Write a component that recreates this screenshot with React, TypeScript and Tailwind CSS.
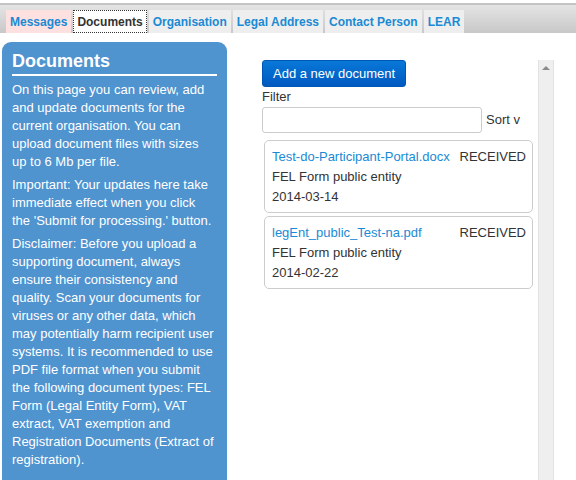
import React from 'react';

const tabs = [
    { label: 'Messages', kind: 'alert' },
    { label: 'Documents', kind: 'active' },
    { label: 'Organisation', kind: 'normal' },
    { label: 'Legal Address', kind: 'normal' },
    { label: 'Contact Person', kind: 'normal' },
    { label: 'LEAR', kind: 'normal' },
];

const documents = [
    { name: 'Test-do-Participant-Portal.docx', status: 'RECEIVED', type: 'FEL Form public entity', date: '2014-03-14' },
    { name: 'legEnt_public_Test-na.pdf', status: 'RECEIVED', type: 'FEL Form public entity', date: '2014-02-22' },
];

const tabClass = (kind: string) => {
    if (kind === 'alert') return 'bg-[#fde0e0] text-[#1a8ad4] border border-transparent';
    if (kind === 'active') return 'bg-white text-[#333] border border-dotted border-[#333]';
    return 'bg-[#eeeeee] text-[#1a8ad4] border border-transparent';
};

export default function App() {
    return (
        <div className="w-[576px] h-[480px] overflow-hidden bg-white font-['Liberation_Sans',Arial,sans-serif]">
            {/* tab bar */}
            <div className="mt-[3px] h-[30px] border-t-2 border-[#c4c4c4] bg-gradient-to-b from-[#e4e4e4] to-[#c8c8c8] flex items-end pl-[6px] gap-[2px]">
                {tabs.map(t => (
                    <div key={t.label} className={`h-[23px] px-[3px] flex items-center text-[12px] font-bold ${tabClass(t.kind)}`}>
                        {t.label}
                    </div>
                ))}
            </div>

            <div className="flex mt-[9px]">
                {/* info panel */}
                <div className="ml-[2px] w-[225px] h-[440px] bg-[#4f93cf] rounded-t-[9px] pl-[10px] pr-[12px] pt-[8px] text-white text-[13px] leading-[18px]">
                    <h1 className="-mr-[2px] text-[18px] font-bold leading-[22px] pb-[2px] border-b-2 border-white">Documents</h1>
                    <p className="mt-[5px]">On this page you can review, add and update documents for the current organisation. You can upload document files with sizes up to 6 Mb per file.</p>
                    <p className="mt-[5px]">Important: Your updates here take immediate effect when you click the 'Submit for processing.' button.</p>
                    <p className="mt-[5px]">Disclaimer: Before you upload a supporting document, always ensure their consistency and quality. Scan your documents for viruses or any other data, which may potentially harm recipient user systems. It is recommended to use PDF file format when you submit the following document types: FEL Form (Legal Entity Form), VAT extract, VAT exemption and Registration Documents (Extract of registration).</p>
                </div>

                {/* documents list */}
                <div className="ml-[35px] mt-[18px] w-[272px] text-[13px] text-[#333]">
                    <button className="h-[27px] px-[10px] rounded-[3px] bg-gradient-to-b from-[#0a78d8] to-[#0059c0] text-white text-[13px] border border-[#0056b3]">
                        Add a new document
                    </button>
                    <div className="mt-[1px] leading-[18px]">Filter</div>
                    <div className="flex items-center mt-[1px]">
                        <input className="w-[220px] h-[26px] border border-[#ccc] rounded-[3px] bg-white" />
                        <span className="ml-[4px]">Sort v</span>
                    </div>
                    <div className="ml-[2px] mt-[7px] w-[269px] flex flex-col gap-[3px]">
                        {documents.map(d => (
                            <div key={d.name} className="border border-[#ccc] rounded-[5px] pl-[7px] pr-[6px] pt-[6px] pb-[5px] leading-[20px]">
                                <div className="flex justify-between">
                                    <span className="text-[#1a8ad4]">{d.name}</span>
                                    <span>{d.status}</span>
                                </div>
                                <div>{d.type}</div>
                                <div>{d.date}</div>
                            </div>
                        ))}
                    </div>
                </div>

                {/* scrollbar */}
                <div className="ml-[4px] mt-[18px] w-[16px] h-[430px] bg-[#efefef] border-x border-[#e2e2e2] flex justify-center pt-[6px]">
                    <div className="w-0 h-0 border-l-[4px] border-r-[4px] border-b-[4px] border-l-transparent border-r-transparent border-b-[#8a8a8a]" />
                </div>
            </div>
        </div>
    );
}
